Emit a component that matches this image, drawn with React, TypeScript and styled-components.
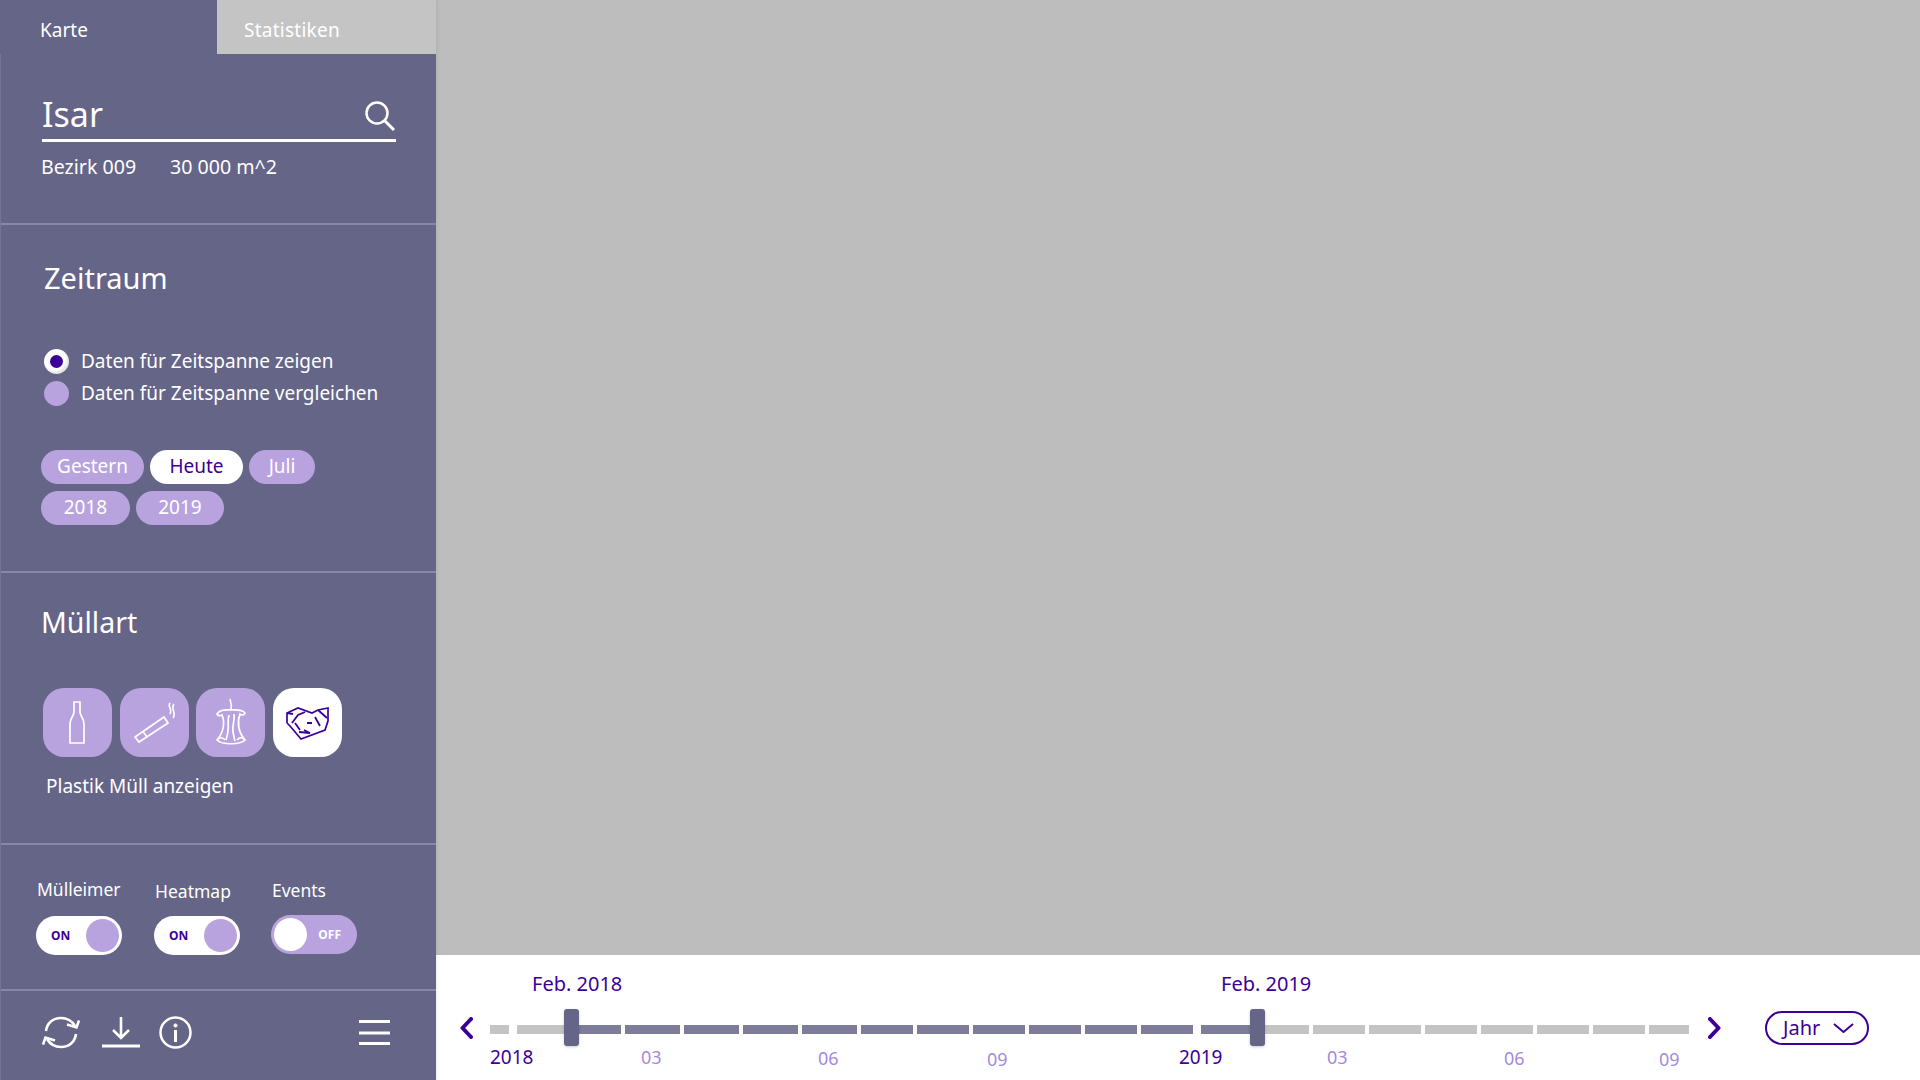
import React from "react";
import styled, { createGlobalStyle } from "styled-components";

const INDIGO = "#3c0099";
const SIDEBAR = "#656588";
const LILAC = "#b9a3df";
const ACTIVE_TRACK = "#7d7c99";
const IDLE_TRACK = "#c4c4c4";

const GlobalStyle = createGlobalStyle`
  html, body {
    margin: 0;
    padding: 0;
    background: #fff;
  }
  body {
    font-family: "Noto Sans", "Liberation Sans", sans-serif;
    color: #fff;
  }
`;

const Page = styled.div`
  display: grid;
  grid-template-columns: 436px 1fr;
  width: 1920px;
  height: 1080px;
  overflow: hidden;
`;

const Sidebar = styled.aside`
  display: flex;
  flex-direction: column;
  background: ${SIDEBAR};
  border-left: 1px solid #74749a;
  box-sizing: border-box;
  box-shadow: 1px 0 3px rgba(0, 0, 0, 0.08);
  z-index: 1;
`;

const Tabs = styled.div`
  display: flex;
  height: 54px;
  margin-left: -1px;
`;

const Tab = styled.div<{ $active?: boolean; $width: number; $inset: number }>`
  width: ${(p) => p.$width}px;
  padding-left: ${(p) => p.$inset}px;
  box-sizing: border-box;
  line-height: 60px;
  font-size: 19px;
  letter-spacing: ${(p) => (p.$active ? 0 : "0.25px")};
  background: ${(p) => (p.$active ? SIDEBAR : "#c4c4c4")};
`;

const Section = styled.section<{ $height: number; $top: number; $last?: boolean }>`
  height: ${(p) => p.$height}px;
  padding-top: ${(p) => p.$top}px;
  box-sizing: border-box;
  border-bottom: ${(p) => (p.$last ? "none" : "2px solid #8887a6")};
`;

const SearchRow = styled.div`
  display: flex;
  align-items: center;
  justify-content: space-between;
  width: 354px;
  height: 44px;
  margin-left: 41px;
  border-bottom: 3px solid #fff;
`;

const SearchTerm = styled.div`
  height: 44px;
  font-size: 34px;
  line-height: 38px;
`;

const SearchIcon = styled.svg`
  width: 32px;
  height: 33px;
  margin: 0 0 2px;
`;

const MetaRow = styled.div`
  display: flex;
  margin: 12px 0 0 40px;
  font-size: 19.6px;
  line-height: 26px;
`;

const MetaItem = styled.span<{ $width?: number }>`
  width: ${(p) => (p.$width ? `${p.$width}px` : "auto")};
`;

const Title = styled.h2<{ $inset: number; $size: number }>`
  margin: 0 0 0 ${(p) => p.$inset}px;
  font-size: ${(p) => p.$size}px;
  line-height: 40px;
  font-weight: 400;
`;

const RadioList = styled.div`
  display: flex;
  flex-direction: column;
  margin: 47px 0 0 43px;
`;

const RadioRow = styled.label`
  display: flex;
  align-items: center;
  gap: 12px;
  height: 32px;
  font-size: 19px;
`;

const RadioDot = styled.span<{ $checked?: boolean }>`
  display: flex;
  align-items: center;
  justify-content: center;
  width: 25px;
  height: 25px;
  border-radius: 50%;
  background: ${(p) => (p.$checked ? "#fff" : LILAC)};
  box-shadow: ${(p) => (p.$checked ? "inset -2px -2px 3px rgba(0, 0, 0, 0.12)" : "none")};

  &::after {
    content: "";
    display: ${(p) => (p.$checked ? "block" : "none")};
    width: 13px;
    height: 13px;
    border-radius: 50%;
    background: ${INDIGO};
  }
`;

const ChipList = styled.div`
  display: flex;
  flex-wrap: wrap;
  gap: 7px 6px;
  width: 290px;
  margin: 41px 0 0 40px;
`;

const Chip = styled.span<{ $width: number; $selected?: boolean }>`
  width: ${(p) => p.$width}px;
  height: 34px;
  border-radius: 17px;
  text-align: center;
  font-size: 19px;
  line-height: 32px;
  color: ${(p) => (p.$selected ? INDIGO : "#fff")};
  background: ${(p) => (p.$selected ? "#fff" : LILAC)};
`;

const TileRow = styled.div`
  display: flex;
  gap: 7.67px;
  margin: 46px 0 0 42px;
`;

const Tile = styled.div<{ $selected?: boolean }>`
  width: 69px;
  height: 69px;
  border-radius: 21px;
  background: ${(p) => (p.$selected ? "#fff" : LILAC)};
  color: ${(p) => (p.$selected ? INDIGO : "#fff")};

  svg {
    display: block;
    width: 69px;
    height: 69px;
    fill: none;
    stroke: currentColor;
    stroke-width: 1.7;
    stroke-linejoin: miter;
  }
`;

const Caption = styled.p`
  margin: 15px 0 0 45px;
  font-size: 19px;
  line-height: 28px;
`;

const ToggleRow = styled.div`
  display: flex;
  margin-left: 35px;
`;

const ToggleGroup = styled.div<{ $width: number }>`
  width: ${(p) => p.$width}px;
`;

const ToggleLabel = styled.div<{ $top: number; $bottom: number }>`
  height: 24px;
  margin: ${(p) => p.$top}px 0 ${(p) => p.$bottom}px 1px;
  font-size: 17.5px;
  line-height: 24px;
`;

const Toggle = styled.div<{ $on: boolean }>`
  display: flex;
  flex-direction: ${(p) => (p.$on ? "row" : "row-reverse")};
  align-items: center;
  justify-content: space-between;
  width: 86px;
  height: 39px;
  padding: 0 ${(p) => (p.$on ? 3 : 16)}px 0 ${(p) => (p.$on ? 15 : 3)}px;
  box-sizing: border-box;
  border-radius: 20px;
  background: ${(p) => (p.$on ? "#fff" : LILAC)};
  color: ${(p) => (p.$on ? INDIGO : "#fff")};
  font-size: 12px;
  font-weight: 700;

  &::after {
    content: "";
    width: 33px;
    height: 33px;
    border-radius: 50%;
    background: ${(p) => (p.$on ? LILAC : "#fff")};
  }
`;

const ActionBar = styled.div`
  display: flex;
  align-items: center;
  height: 85px;
  padding: 0 46px 2px 41px;
  box-sizing: border-box;
  color: #fff;

  svg {
    display: block;
    fill: none;
    stroke: currentColor;
  }
`;

const ActionSlot = styled.span<{ $gap: number }>`
  margin-left: ${(p) => p.$gap}px;
`;

const MenuSlot = styled.span`
  margin-left: auto;
`;

const Main = styled.main`
  display: flex;
  flex-direction: column;
`;

const MapArea = styled.div`
  height: 955px;
  background: #bdbdbd;
`;

const Timeline = styled.div`
  display: grid;
  grid-template-columns: 30px 1199px 19px 13px 44px 104px;
  grid-template-rows: 37px 37px 24px;
  height: 125px;
  padding: 17px 0 0 24px;
  box-sizing: border-box;
  background: #fff;
`;

const DateRow = styled.div`
  grid-column: 2;
  grid-row: 1;
  display: flex;
  padding-left: 42px;
`;

const DateLabel = styled.span<{ $width?: number }>`
  flex: none;
  width: ${(p) => (p.$width ? `${p.$width}px` : "auto")};
  color: ${INDIGO};
  font-size: 20px;
  line-height: 24px;
`;

const Arrow = styled.svg<{ $column: number }>`
  grid-column: ${(p) => p.$column};
  grid-row: 2;
  align-self: center;
  width: 13px;
  height: 22px;
  fill: none;
  stroke: ${INDIGO};
  stroke-width: 4;
  stroke-linecap: round;
  stroke-linejoin: round;
`;

const TrackArea = styled.div`
  grid-column: 2;
  grid-row: 2;
  position: relative;
  display: flex;
  align-items: flex-start;
  padding-top: 16px;
`;

const Segment = styled.span<{ $width: number; $gap: number; $from: string; $to: string; $split: number }>`
  flex: none;
  width: ${(p) => p.$width}px;
  height: 9px;
  margin-left: ${(p) => p.$gap}px;
  background: linear-gradient(
    to right,
    ${(p) => p.$from} ${(p) => p.$split}px,
    ${(p) => p.$to} ${(p) => p.$split}px
  );
`;

const Handle = styled.span<{ $left: number }>`
  position: absolute;
  top: 0;
  left: ${(p) => p.$left}px;
  width: 15px;
  height: 37px;
  border-radius: 3px;
  background: ${SIDEBAR};
  box-shadow: 0 1px 3px rgba(0, 0, 0, 0.2);
`;

const TickRow = styled.div`
  grid-column: 2;
  grid-row: 3;
  display: flex;
  margin-top: -1px;
`;

const Tick = styled.span<{ $width: number; $year?: boolean; $drop: number }>`
  flex: none;
  width: ${(p) => p.$width}px;
  padding-top: ${(p) => p.$drop}px;
  font-size: ${(p) => (p.$year ? 19 : 18)}px;
  line-height: 24px;
  color: ${(p) => (p.$year ? INDIGO : "#a58ad9")};
`;

const RangeSelect = styled.div`
  grid-column: 6;
  grid-row: 2;
  align-self: center;
  display: flex;
  align-items: center;
  justify-content: space-between;
  height: 34px;
  padding: 0 13px 0 16px;
  box-sizing: border-box;
  border: 2px solid ${INDIGO};
  border-radius: 17px;
  color: ${INDIGO};
  font-size: 20px;
`;

const BottleIcon = () => (
  <svg viewBox="0 0 69 69">
    <path d="M31 14H37V24C37 28 41 30 41 36V55H27V36C27 30 31 28 31 24Z" />
  </svg>
);

const CigaretteIcon = () => (
  <svg viewBox="0 0 69 69">
    <path d="M15 49L44 29L48 35L19 54Z" />
    <path d="M23 43.5L27 49" />
    <path d="M50 15C47 19 53 21 50 26M54 16C50 21 57 25 53 30" strokeWidth="1.6" />
  </svg>
);

const CoreIcon = () => (
  <svg viewBox="0 0 69 69">
    <path d="M34 11C35 14 36 17 35 22" />
    <path d="M21 26C24 21 30 22 35 22C40 22 46 21 49 25C48 28 45 27 44 26C41 34 42 44 49 52C44 57 26 57 21 52C28 44 29 34 26 27C24 28 22 28 21 26Z" />
    <path d="M33 27C31 34 33 36 32 42C32 46 31 48 30 52M38 26C39 33 36 37 37 44C38 48 38 50 39 53" />
    <path d="M21 52C24 49 27 49 29 52M41 52C44 49 46 49 49 52" />
  </svg>
);

const PlasticIcon = () => (
  <svg viewBox="0 0 69 69">
    <path d="M14 35V25L25 20L39 25L45 22L55 20V33L52 42L28 51L17 38L14 35" />
    <path d="M14 25L20 26M19 35L25 27L32 24M22 35L27 42M31 42L37 45L26 44M34 35H39M42 29L47 38M45 22L54 30" strokeWidth="1.8" />
  </svg>
);

const chips = [
  { label: "Gestern", width: 103 },
  { label: "Heute", width: 93, selected: true },
  { label: "Juli", width: 66 },
  { label: "2018", width: 89 },
  { label: "2019", width: 88 },
];

const toggles = [
  { label: "Mülleimer", on: true, width: 118, top: -2, bottom: 15 },
  { label: "Heatmap", on: true, width: 117, top: 0, bottom: 13 },
  { label: "Events", on: false, width: 86, top: -1, bottom: 13 },
];

const active = { from: ACTIVE_TRACK, to: ACTIVE_TRACK, split: 0 };
const idle = { from: IDLE_TRACK, to: IDLE_TRACK, split: 0 };

const segments = [
  { width: 19, gap: 0, ...idle },
  { width: 104, gap: 8, from: IDLE_TRACK, to: ACTIVE_TRACK, split: 47 },
  ...[55, 55, 55, 55, 52, 52, 52, 52, 52, 52].map((width) => ({ width, gap: 4, ...active })),
  { width: 108, gap: 8, from: ACTIVE_TRACK, to: IDLE_TRACK, split: 56 },
  ...[52, 52, 52, 52, 52, 52, 40].map((width) => ({ width, gap: 4, ...idle })),
];

const ticks = [
  { label: "2018", width: 151, year: true, drop: 0 },
  { label: "03", width: 177, drop: 0 },
  { label: "06", width: 169, drop: 1 },
  { label: "09", width: 192, drop: 2 },
  { label: "2019", width: 148, year: true, drop: 0 },
  { label: "03", width: 177, drop: 0 },
  { label: "06", width: 155, drop: 1 },
  { label: "09", width: 40, drop: 2 },
];

const App = () => (
  <>
    <GlobalStyle />
    <Page>
      <Sidebar>
        <Tabs>
          <Tab $active $width={217} $inset={40}>Karte</Tab>
          <Tab $width={219} $inset={27}>Statistiken</Tab>
        </Tabs>

        <Section $height={171} $top={41}>
          <SearchRow>
            <SearchTerm>Isar</SearchTerm>
            <SearchIcon viewBox="0 0 32 33" fill="none" stroke="#fff">
              <circle cx="13" cy="13" r="10.5" strokeWidth="2.5" />
              <path d="M21 21L30 30" strokeWidth="3" />
            </SearchIcon>
          </SearchRow>
          <MetaRow>
            <MetaItem $width={129}>Bezirk 009</MetaItem>
            <MetaItem>30 000 m^2</MetaItem>
          </MetaRow>
        </Section>

        <Section $height={348} $top={33}>
          <Title $inset={43} $size={29}>Zeitraum</Title>
          <RadioList>
            <RadioRow>
              <RadioDot $checked />
              Daten für Zeitspanne zeigen
            </RadioRow>
            <RadioRow>
              <RadioDot />
              Daten für Zeitspanne vergleichen
            </RadioRow>
          </RadioList>
          <ChipList>
            {chips.map((chip) => (
              <Chip key={chip.label} $width={chip.width} $selected={chip.selected}>
                {chip.label}
              </Chip>
            ))}
          </ChipList>
        </Section>

        <Section $height={272} $top={29}>
          <Title $inset={40} $size={28.5}>Müllart</Title>
          <TileRow>
            <Tile><BottleIcon /></Tile>
            <Tile><CigaretteIcon /></Tile>
            <Tile><CoreIcon /></Tile>
            <Tile $selected><PlasticIcon /></Tile>
          </TileRow>
          <Caption>Plastik Müll anzeigen</Caption>
        </Section>

        <Section $height={146} $top={34}>
          <ToggleRow>
            {toggles.map((toggle) => (
              <ToggleGroup key={toggle.label} $width={toggle.width}>
                <ToggleLabel $top={toggle.top} $bottom={toggle.bottom}>{toggle.label}</ToggleLabel>
                <Toggle $on={toggle.on}>{toggle.on ? "ON" : "OFF"}</Toggle>
              </ToggleGroup>
            ))}
          </ToggleRow>
        </Section>

        <Section $height={89} $top={0} $last>
          <ActionBar>
            <svg width="38" height="33" viewBox="0 0 38 33" strokeWidth="2.6">
              <path d="M4 15C5 7 11 2 19 2C25 2 30 5 33 10" />
              <path d="M25 8.5L34.5 11.5L37 4.5" />
              <path d="M34 18C33 26 27 31 19 31C13 31 8 28 5 23" />
              <path d="M13 24.5L3.5 21.5L1 28.5" />
            </svg>
            <ActionSlot $gap={22}>
              <svg width="38" height="31" viewBox="0 0 38 31" strokeWidth="3">
                <path d="M19 0V21M11 13L19 21L27 13" strokeWidth="2.6" />
                <path d="M0 29H38" />
              </svg>
            </ActionSlot>
            <ActionSlot $gap={19}>
              <svg width="33" height="33" viewBox="0 0 33 33" strokeWidth="2.5">
                <circle cx="16.5" cy="16.5" r="15" />
                <path d="M16.5 14V26" strokeWidth="3" />
                <circle cx="16.5" cy="9.5" r="1.6" fill="#fff" strokeWidth="1" />
              </svg>
            </ActionSlot>
            <MenuSlot>
              <svg width="31" height="25" viewBox="0 0 31 25" strokeWidth="3">
                <path d="M0 1.5H31M0 13H31M0 23.5H31" />
              </svg>
            </MenuSlot>
          </ActionBar>
        </Section>
      </Sidebar>

      <Main>
        <MapArea />
        <Timeline>
          <DateRow>
            <DateLabel $width={689}>Feb. 2018</DateLabel>
            <DateLabel>Feb. 2019</DateLabel>
          </DateRow>
          <Arrow $column={1} viewBox="0 0 13 22">
            <path d="M11 2L2.5 11L11 20" />
          </Arrow>
          <TrackArea>
            {segments.map((seg, i) => (
              <Segment key={i} $width={seg.width} $gap={seg.gap} $from={seg.from} $to={seg.to} $split={seg.split} />
            ))}
            <Handle $left={74} />
            <Handle $left={760} />
          </TrackArea>
          <TickRow>
            {ticks.map((tick, i) => (
              <Tick key={i} $width={tick.width} $year={tick.year} $drop={tick.drop}>
                {tick.label}
              </Tick>
            ))}
          </TickRow>
          <Arrow $column={4} viewBox="0 0 13 22">
            <path d="M2 2L10.5 11L2 20" />
          </Arrow>
          <RangeSelect>
            Jahr
            <svg width="21" height="10" viewBox="0 0 21 10" fill="none" stroke={INDIGO} strokeWidth="2">
              <path d="M1 1L10.5 9L20 1" />
            </svg>
          </RangeSelect>
        </Timeline>
      </Main>
    </Page>
  </>
);

export default App;
